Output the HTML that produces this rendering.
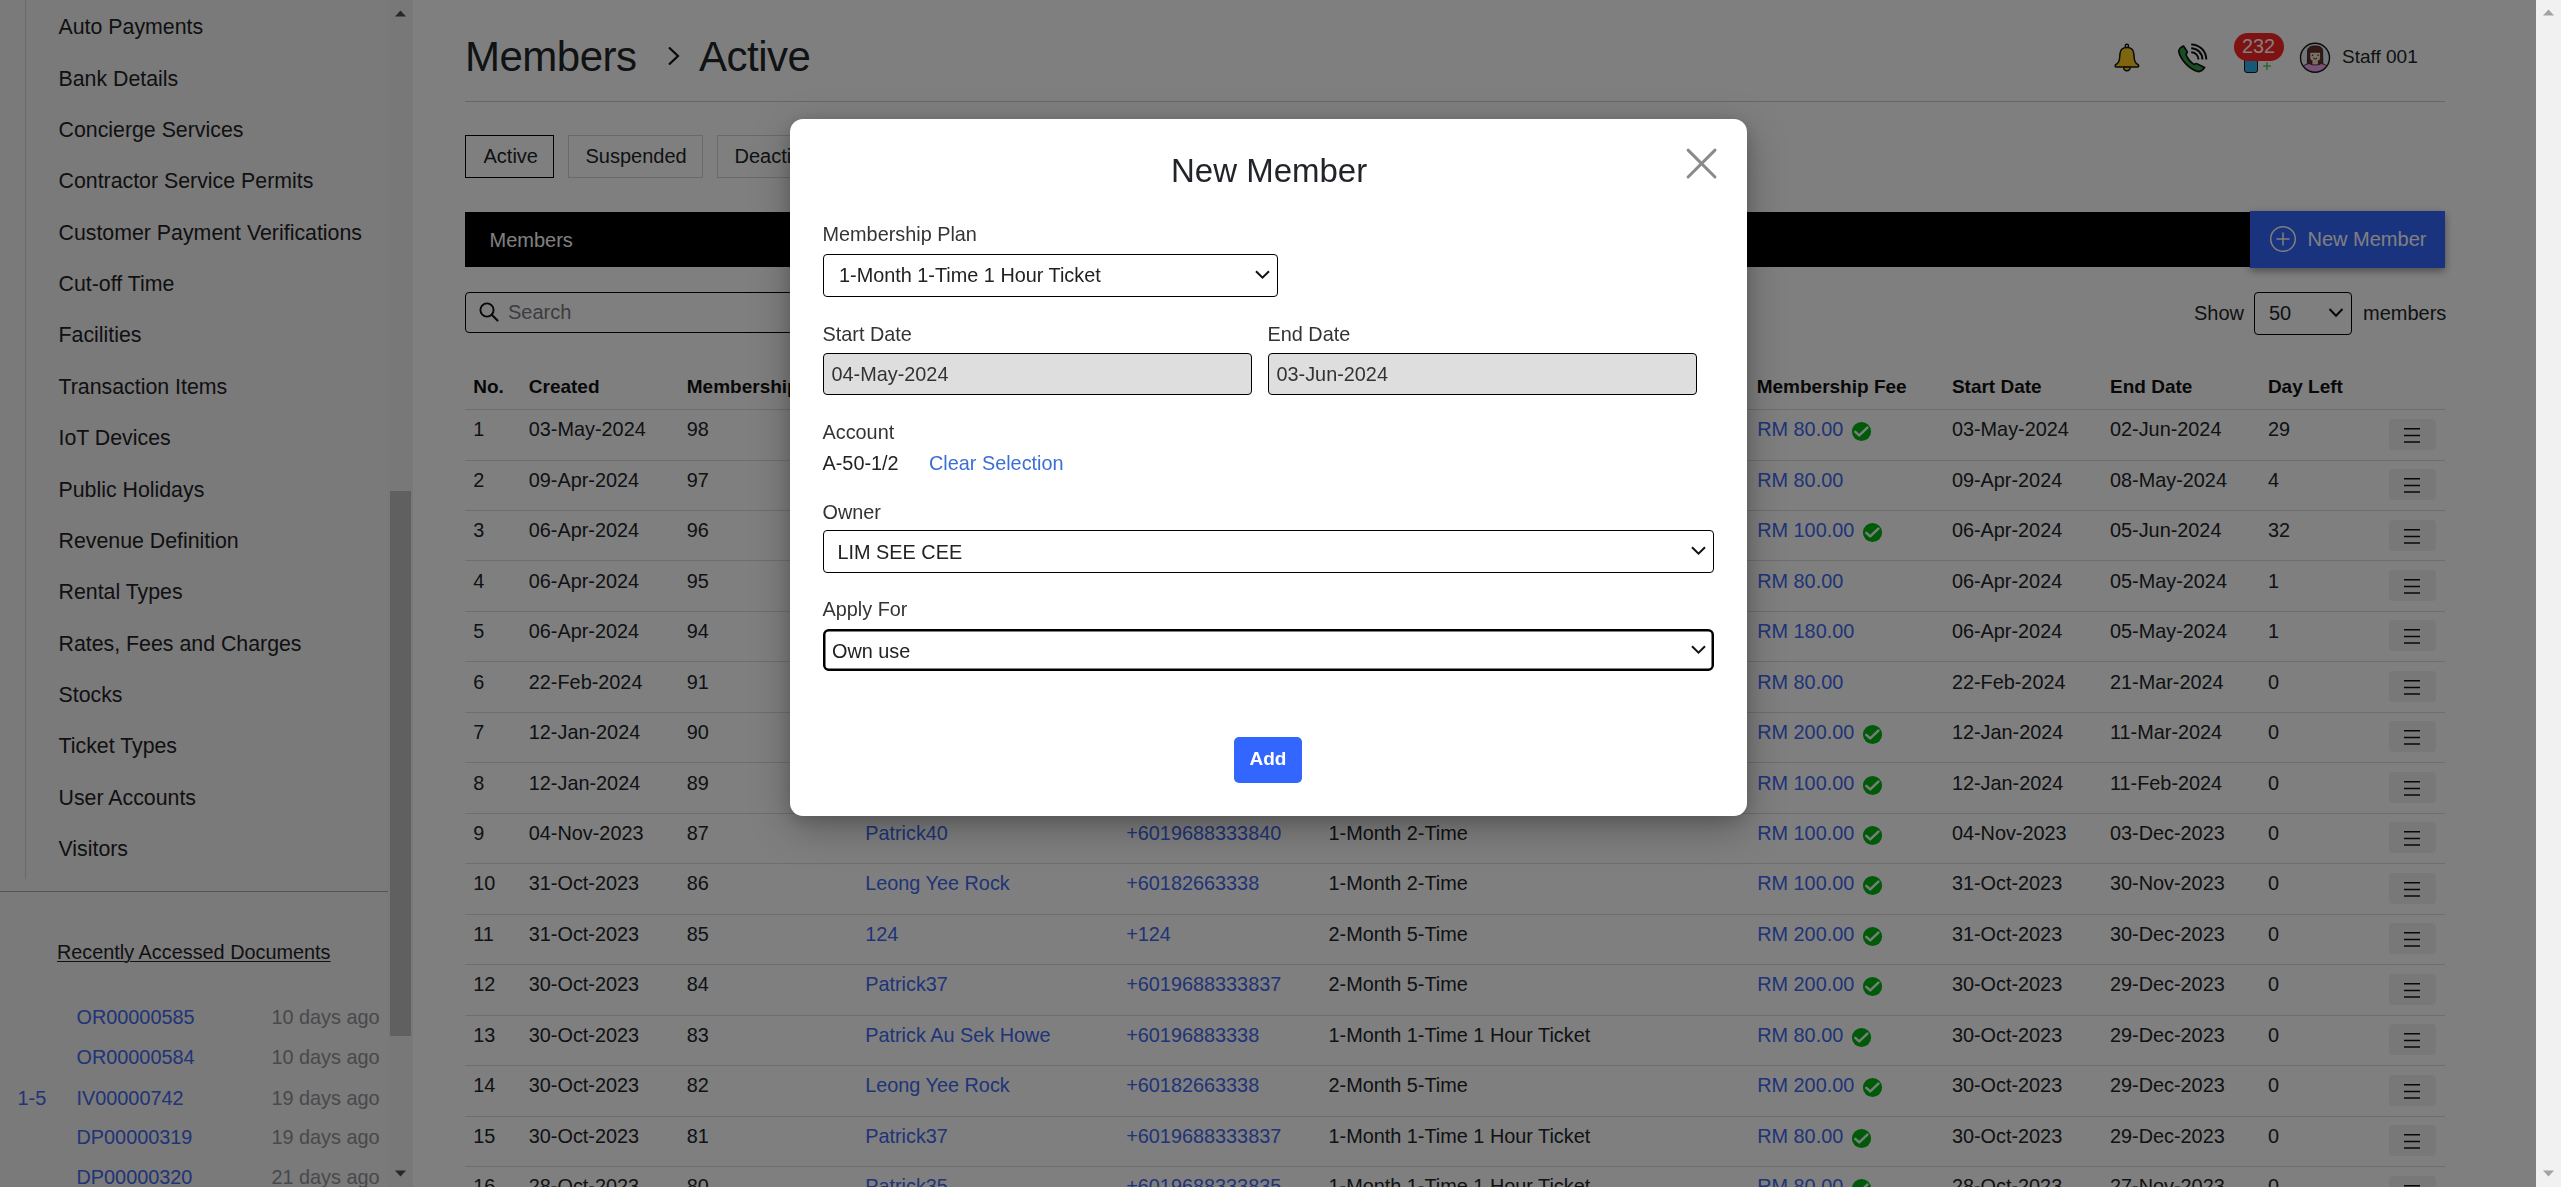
<!DOCTYPE html>
<html><head><meta charset="utf-8"><title>Members - Active</title>
<style>
html,body{margin:0;padding:0;width:2561px;height:1187px;overflow:hidden;background:#fff;font-family:"Liberation Sans", sans-serif;}
.t{position:absolute;white-space:nowrap;}
.r{position:absolute;box-sizing:border-box;}
svg{position:absolute;overflow:visible;}
</style></head><body>

<div class="r" style="left:0px;top:0px;width:413px;height:1187px;background:#f4f4f4;"></div>
<div class="r" style="left:25px;top:0px;width:1px;height:879px;background:#d2d2d2;"></div>
<div class="t " style="left:58.5px;top:17px;font-size:21.33px;line-height:21.33px;color:#1f2226;font-weight:400;">Auto Payments</div>
<div class="t " style="left:58.5px;top:69px;font-size:21.33px;line-height:21.33px;color:#1f2226;font-weight:400;">Bank Details</div>
<div class="t " style="left:58.5px;top:120px;font-size:21.33px;line-height:21.33px;color:#1f2226;font-weight:400;">Concierge Services</div>
<div class="t " style="left:58.5px;top:171px;font-size:21.33px;line-height:21.33px;color:#1f2226;font-weight:400;">Contractor Service Permits</div>
<div class="t " style="left:58.5px;top:223px;font-size:21.33px;line-height:21.33px;color:#1f2226;font-weight:400;">Customer Payment Verifications</div>
<div class="t " style="left:58.5px;top:274px;font-size:21.33px;line-height:21.33px;color:#1f2226;font-weight:400;">Cut-off Time</div>
<div class="t " style="left:58.5px;top:325px;font-size:21.33px;line-height:21.33px;color:#1f2226;font-weight:400;">Facilities</div>
<div class="t " style="left:58.5px;top:377px;font-size:21.33px;line-height:21.33px;color:#1f2226;font-weight:400;">Transaction Items</div>
<div class="t " style="left:58.5px;top:428px;font-size:21.33px;line-height:21.33px;color:#1f2226;font-weight:400;">IoT Devices</div>
<div class="t " style="left:58.5px;top:480px;font-size:21.33px;line-height:21.33px;color:#1f2226;font-weight:400;">Public Holidays</div>
<div class="t " style="left:58.5px;top:531px;font-size:21.33px;line-height:21.33px;color:#1f2226;font-weight:400;">Revenue Definition</div>
<div class="t " style="left:58.5px;top:582px;font-size:21.33px;line-height:21.33px;color:#1f2226;font-weight:400;">Rental Types</div>
<div class="t " style="left:58.5px;top:634px;font-size:21.33px;line-height:21.33px;color:#1f2226;font-weight:400;">Rates, Fees and Charges</div>
<div class="t " style="left:58.5px;top:685px;font-size:21.33px;line-height:21.33px;color:#1f2226;font-weight:400;">Stocks</div>
<div class="t " style="left:58.5px;top:736px;font-size:21.33px;line-height:21.33px;color:#1f2226;font-weight:400;">Ticket Types</div>
<div class="t " style="left:58.5px;top:788px;font-size:21.33px;line-height:21.33px;color:#1f2226;font-weight:400;">User Accounts</div>
<div class="t " style="left:58.5px;top:839px;font-size:21.33px;line-height:21.33px;color:#1f2226;font-weight:400;">Visitors</div>
<div class="r" style="left:0px;top:891px;width:388px;height:1px;background:#a9a9a9;"></div>
<div class="t " style="left:57.0px;top:943px;font-size:19.85px;line-height:19.85px;color:#1f2226;font-weight:400;text-decoration:underline;text-underline-offset:2px;text-decoration-thickness:1px;">Recently Accessed Documents</div>
<div class="t " style="left:76.5px;top:1008px;font-size:19.85px;line-height:19.85px;color:#4068ee;font-weight:400;">OR00000585</div>
<div class="t" style="right:2181.5px;top:1008px;font-size:19.85px;line-height:19.85px;color:#8f9396;font-weight:400;text-align:right;">10 days ago</div>
<div class="t " style="left:76.5px;top:1048px;font-size:19.85px;line-height:19.85px;color:#4068ee;font-weight:400;">OR00000584</div>
<div class="t" style="right:2181.5px;top:1048px;font-size:19.85px;line-height:19.85px;color:#8f9396;font-weight:400;text-align:right;">10 days ago</div>
<div class="t " style="left:76.5px;top:1089px;font-size:19.85px;line-height:19.85px;color:#4068ee;font-weight:400;">IV00000742</div>
<div class="t" style="right:2181.5px;top:1089px;font-size:19.85px;line-height:19.85px;color:#8f9396;font-weight:400;text-align:right;">19 days ago</div>
<div class="t " style="left:76.5px;top:1128px;font-size:19.85px;line-height:19.85px;color:#4068ee;font-weight:400;">DP00000319</div>
<div class="t" style="right:2181.5px;top:1128px;font-size:19.85px;line-height:19.85px;color:#8f9396;font-weight:400;text-align:right;">19 days ago</div>
<div class="t " style="left:76.5px;top:1168px;font-size:19.85px;line-height:19.85px;color:#4068ee;font-weight:400;">DP00000320</div>
<div class="t" style="right:2181.5px;top:1168px;font-size:19.85px;line-height:19.85px;color:#8f9396;font-weight:400;text-align:right;">21 days ago</div>
<div class="t " style="left:17.5px;top:1089px;font-size:19.85px;line-height:19.85px;color:#4068ee;font-weight:400;">1-5</div>
<div class="r" style="left:388px;top:0px;width:25px;height:1187px;background:#f1f1f1;"></div>
<div class="r" style="left:390px;top:491px;width:21px;height:545px;background:#c1c1c1;"></div>
<svg style="left:395px;top:10px" width="12" height="7"><polygon points="0,6.5 5.5,0.5 11,6.5" fill="#505050"/></svg>
<svg style="left:395px;top:1170px" width="12" height="7"><polygon points="0,0.5 5.5,6.5 11,0.5" fill="#505050"/></svg>
<div class="t " style="left:465.0px;top:36px;font-size:42px;line-height:42px;color:#212529;font-weight:400;letter-spacing:-0.5px;">Members</div>
<svg style="left:667px;top:46px" width="14" height="20"><polyline points="2,1.5 11,10 2,18.5" fill="none" stroke="#111" stroke-width="2.2"/></svg>
<div class="t " style="left:699.0px;top:36px;font-size:42px;line-height:42px;color:#212529;font-weight:400;letter-spacing:-0.5px;">Active</div>
<div class="r" style="left:465px;top:101px;width:1980px;height:1px;background:#cfcfcf;"></div>
<svg style="left:2108px;top:38px" width="40" height="40" viewBox="0 0 40 40">
<circle cx="18.9" cy="7.9" r="1.7" fill="none" stroke="#151515" stroke-width="1.4"/>
<path d="M8 28.9 C6.8 28.9 6.8 26.8 8.3 26.3 C10.2 25.3 11.3 23.5 11.6 20 L12 15.5 C12.4 11.5 14.5 9.6 18.9 9.6 C23.3 9.6 25.4 11.5 25.8 15.5 L26.2 20 C26.5 23.5 27.6 25.3 29.5 26.3 C31 26.8 31 28.9 29.8 28.9 Z" fill="#ffcc1c" stroke="#151515" stroke-width="1.5" stroke-linejoin="round"/>
<path d="M15.6 29.1 C15.6 31.6 17 32.8 18.9 32.8 C20.8 32.8 22.2 31.6 22.2 29.1 Z" fill="#ffcc1c" stroke="#151515" stroke-width="1.4" stroke-linejoin="round"/>
</svg>
<svg style="left:2173px;top:38px" width="40" height="40" viewBox="0 0 40 40">
<path d="M10.5 8 L14.2 13.6 C14.4 14.3 14.2 14.8 13.7 15.3 L12.9 16.2 C13.5 19.5 17.5 24.5 21.2 26.6 L22.6 25.8 C23.2 25.5 23.8 25.5 24.4 25.9 L31.6 29.6 C29.5 32.5 27.5 33.9 25 33.5 C16 31 7.5 21.5 5.8 13.5 C5.6 11.5 8 9 10.5 8 Z" fill="#2f9f45" stroke="#101010" stroke-width="1.7" stroke-linejoin="round"/>
<path d="M18.2 14.2 A7.3 7.3 0 0 1 25.5 21.5" fill="none" stroke="#101010" stroke-width="2"/>
<path d="M18.2 10.3 A11.2 11.2 0 0 1 29.4 21.5" fill="none" stroke="#101010" stroke-width="2"/>
<path d="M18.2 6.4 A15.1 15.1 0 0 1 33.3 21.5" fill="none" stroke="#101010" stroke-width="2"/>
</svg>
<div class="r" style="left:2244px;top:58px;width:14px;height:15px;background:#2fb0ee;border:1.2px solid #151515;border-radius:3px;"></div>
<svg style="left:2262px;top:61px" width="10" height="10"><path d="M5 1.2 V8.8 M1.2 5 H8.8" stroke="#6cc46c" stroke-width="1.6"/></svg>
<div class="r" style="left:2234px;top:33px;width:50px;height:28px;background:#ff2424;border-radius:14px;"></div>
<div class="t " style="left:2242.0px;top:37px;font-size:19.85px;line-height:19.85px;color:#fff;font-weight:400;">232</div>
<svg style="left:2295px;top:38px" width="40" height="40" viewBox="0 0 40 40">
<defs><clipPath id="avc"><circle cx="20" cy="19.8" r="14.3"/></clipPath></defs>
<circle cx="20" cy="19.8" r="14.3" fill="#e9eef5"/>
<g clip-path="url(#avc)">
<path d="M12.3 29 L12.6 13 C12.6 9.5 15 7.9 20.1 7.9 C25.2 7.9 27.6 9.5 27.6 13 L27.9 29 Z" fill="#6e3020" stroke="#1a1a1a" stroke-width="0.8"/>
<path d="M14.8 14.2 L14.8 19.5 C14.8 22 17 23.8 20.2 23.8 C23.4 23.8 25.6 22 25.6 19.5 L25.6 14.2 Z" fill="#f6dccb" stroke="#1a1a1a" stroke-width="0.7"/>
<path d="M17 23 V27.5 H23.4 V23" fill="#f6dccb" stroke="#1a1a1a" stroke-width="0.7"/>
<path d="M5 36 C6 29 9 26.2 14.5 25.6 C16 27.4 24.4 27.4 25.9 25.6 C31.4 26.2 34.4 29 35.4 36 Z" fill="#f2a6ec" stroke="#1a1a1a" stroke-width="0.8"/>
<circle cx="17.5" cy="17.3" r="0.75" fill="#1a1a1a"/><circle cx="23.1" cy="17.3" r="0.75" fill="#1a1a1a"/>
<path d="M18.3 20.1 Q20.2 22.1 22 20.1" fill="none" stroke="#1a1a1a" stroke-width="0.9"/>
</g>
<circle cx="20" cy="19.8" r="14.5" fill="none" stroke="#151515" stroke-width="1.4"/>
</svg>
<div class="t " style="left:2342.0px;top:47px;font-size:19px;line-height:19px;color:#212529;font-weight:400;">Staff 001</div>
<div class="r" style="left:465px;top:135px;width:89px;height:43px;border:1px solid #000;"></div>
<div class="t " style="left:483.5px;top:146px;font-size:20px;line-height:20px;color:#212529;font-weight:400;">Active</div>
<div class="r" style="left:568px;top:135px;width:135px;height:43px;border:1px solid #d4d4d4;"></div>
<div class="t " style="left:585.5px;top:146px;font-size:20px;line-height:20px;color:#212529;font-weight:400;">Suspended</div>
<div class="r" style="left:717px;top:135px;width:163px;height:43px;border:1px solid #d4d4d4;"></div>
<div class="t " style="left:734.5px;top:146px;font-size:20px;line-height:20px;color:#212529;font-weight:400;">Deactivated</div>
<div class="r" style="left:465px;top:212px;width:1786px;height:55px;background:#000;"></div>
<div class="t " style="left:489.5px;top:230px;font-size:20px;line-height:20px;color:#fff;font-weight:400;">Members</div>
<div class="r" style="left:2250px;top:211px;width:195px;height:57px;background:#3366ff;box-shadow:0 3px 8px rgba(0,0,0,0.4);"></div>
<svg style="left:2268px;top:224px" width="30" height="30"><circle cx="15" cy="15" r="12.3" fill="none" stroke="#fff" stroke-width="1.5"/><path d="M15 8.5 V21.5 M8.5 15 H21.5" stroke="#fff" stroke-width="1.5"/></svg>
<div class="t " style="left:2307.5px;top:229px;font-size:20px;line-height:20px;color:#fff;font-weight:400;">New Member</div>
<div class="r" style="left:465px;top:292px;width:835px;height:41px;border:1px solid #000;border-radius:4px;"></div>
<svg style="left:478px;top:301px" width="24" height="24"><circle cx="9" cy="9" r="6.6" fill="none" stroke="#111" stroke-width="1.9"/><path d="M13.8 13.8 L19.5 19.5" stroke="#111" stroke-width="2.1" stroke-linecap="round"/></svg>
<div class="t " style="left:508.0px;top:302px;font-size:20px;line-height:20px;color:#777b80;font-weight:400;">Search</div>
<div class="t " style="left:2194.0px;top:303px;font-size:20px;line-height:20px;color:#212529;font-weight:400;">Show</div>
<div class="r" style="left:2254px;top:292px;width:98px;height:43px;border:1px solid #000;border-radius:4px;"></div>
<div class="t " style="left:2269.0px;top:303px;font-size:20px;line-height:20px;color:#212529;font-weight:400;">50</div>
<svg style="left:2328px;top:307px" width="18" height="12"><polyline points="1.5,2 8,8.8 14.5,2" fill="none" stroke="#111" stroke-width="2"/></svg>
<div class="t " style="left:2363.0px;top:303px;font-size:20px;line-height:20px;color:#212529;font-weight:400;">members</div>
<div class="t " style="left:473.2px;top:377px;font-size:19px;line-height:19px;color:#111;font-weight:700;">No.</div>
<div class="t " style="left:528.8px;top:377px;font-size:19px;line-height:19px;color:#111;font-weight:700;">Created</div>
<div class="t " style="left:686.8px;top:377px;font-size:19px;line-height:19px;color:#111;font-weight:700;">Membership ID</div>
<div class="t " style="left:866.2px;top:377px;font-size:19px;line-height:19px;color:#111;font-weight:700;">Name</div>
<div class="t " style="left:1126.2px;top:377px;font-size:19px;line-height:19px;color:#111;font-weight:700;">Phone No.</div>
<div class="t " style="left:1328.5px;top:377px;font-size:19px;line-height:19px;color:#111;font-weight:700;">Membership Plan</div>
<div class="t " style="left:1756.7px;top:377px;font-size:19px;line-height:19px;color:#111;font-weight:700;">Membership Fee</div>
<div class="t " style="left:1951.9px;top:377px;font-size:19px;line-height:19px;color:#111;font-weight:700;">Start Date</div>
<div class="t " style="left:2110.0px;top:377px;font-size:19px;line-height:19px;color:#111;font-weight:700;">End Date</div>
<div class="t " style="left:2267.9px;top:377px;font-size:19px;line-height:19px;color:#111;font-weight:700;">Day Left</div>
<div class="r" style="left:465px;top:409px;width:1980px;height:1px;background:#dcdcdc;"></div>
<div class="t " style="left:473.2px;top:420px;font-size:19.85px;line-height:19.85px;color:#212529;font-weight:400;">1</div>
<div class="t " style="left:528.8px;top:420px;font-size:19.85px;line-height:19.85px;color:#212529;font-weight:400;">03-May-2024</div>
<div class="t " style="left:686.8px;top:420px;font-size:19.85px;line-height:19.85px;color:#212529;font-weight:400;">98</div>
<div class="t " style="left:865.2px;top:420px;font-size:19.85px;line-height:19.85px;color:#4068ee;font-weight:400;">Member98</div>
<div class="t " style="left:1126.2px;top:420px;font-size:19.85px;line-height:19.85px;color:#4068ee;font-weight:400;">+60123456798</div>
<div class="t " style="left:1328.5px;top:420px;font-size:19.85px;line-height:19.85px;color:#212529;font-weight:400;">1-Month 1-Time 1 Hour Ticket</div>
<div class="t " style="left:1757.2px;top:420px;font-size:19.85px;line-height:19.85px;color:#4068ee;font-weight:400;">RM 80.00</div>
<svg style="left:1850.7px;top:421.3px" width="21" height="21"><circle cx="10.5" cy="10.5" r="9.6" fill="#00b414"/><polyline points="4.3,10.9 8.2,14.4 16.4,6.6" fill="none" stroke="#f0fff0" stroke-width="2.5" stroke-linecap="round" stroke-linejoin="round"/></svg>
<div class="t " style="left:1951.9px;top:420px;font-size:19.85px;line-height:19.85px;color:#212529;font-weight:400;">03-May-2024</div>
<div class="t " style="left:2110.0px;top:420px;font-size:19.85px;line-height:19.85px;color:#212529;font-weight:400;">02-Jun-2024</div>
<div class="t " style="left:2267.9px;top:420px;font-size:19.85px;line-height:19.85px;color:#212529;font-weight:400;">29</div>
<div class="r" style="left:2389px;top:419px;width:47px;height:31px;background:#f0f0f0;border-radius:4px;"></div>
<svg style="left:2400px;top:418.60px" width="24" height="31"><path d="M4 9.7 H20 M4 16.4 H20 M4 23 H20" stroke="#111" stroke-width="1.5"/></svg>
<div class="r" style="left:465px;top:460px;width:1980px;height:1px;background:#dcdcdc;"></div>
<div class="t " style="left:473.2px;top:471px;font-size:19.85px;line-height:19.85px;color:#212529;font-weight:400;">2</div>
<div class="t " style="left:528.8px;top:471px;font-size:19.85px;line-height:19.85px;color:#212529;font-weight:400;">09-Apr-2024</div>
<div class="t " style="left:686.8px;top:471px;font-size:19.85px;line-height:19.85px;color:#212529;font-weight:400;">97</div>
<div class="t " style="left:865.2px;top:471px;font-size:19.85px;line-height:19.85px;color:#4068ee;font-weight:400;">Member97</div>
<div class="t " style="left:1126.2px;top:471px;font-size:19.85px;line-height:19.85px;color:#4068ee;font-weight:400;">+60123456797</div>
<div class="t " style="left:1328.5px;top:471px;font-size:19.85px;line-height:19.85px;color:#212529;font-weight:400;">1-Month 1-Time 1 Hour Ticket</div>
<div class="t " style="left:1757.2px;top:471px;font-size:19.85px;line-height:19.85px;color:#4068ee;font-weight:400;">RM 80.00</div>
<div class="t " style="left:1951.9px;top:471px;font-size:19.85px;line-height:19.85px;color:#212529;font-weight:400;">09-Apr-2024</div>
<div class="t " style="left:2110.0px;top:471px;font-size:19.85px;line-height:19.85px;color:#212529;font-weight:400;">08-May-2024</div>
<div class="t " style="left:2267.9px;top:471px;font-size:19.85px;line-height:19.85px;color:#212529;font-weight:400;">4</div>
<div class="r" style="left:2389px;top:469px;width:47px;height:31px;background:#f0f0f0;border-radius:4px;"></div>
<svg style="left:2400px;top:469.06px" width="24" height="31"><path d="M4 9.7 H20 M4 16.4 H20 M4 23 H20" stroke="#111" stroke-width="1.5"/></svg>
<div class="r" style="left:465px;top:510px;width:1980px;height:1px;background:#dcdcdc;"></div>
<div class="t " style="left:473.2px;top:521px;font-size:19.85px;line-height:19.85px;color:#212529;font-weight:400;">3</div>
<div class="t " style="left:528.8px;top:521px;font-size:19.85px;line-height:19.85px;color:#212529;font-weight:400;">06-Apr-2024</div>
<div class="t " style="left:686.8px;top:521px;font-size:19.85px;line-height:19.85px;color:#212529;font-weight:400;">96</div>
<div class="t " style="left:865.2px;top:521px;font-size:19.85px;line-height:19.85px;color:#4068ee;font-weight:400;">Member96</div>
<div class="t " style="left:1126.2px;top:521px;font-size:19.85px;line-height:19.85px;color:#4068ee;font-weight:400;">+60123456796</div>
<div class="t " style="left:1328.5px;top:521px;font-size:19.85px;line-height:19.85px;color:#212529;font-weight:400;">1-Month 2-Time</div>
<div class="t " style="left:1757.2px;top:521px;font-size:19.85px;line-height:19.85px;color:#4068ee;font-weight:400;">RM 100.00</div>
<svg style="left:1861.7px;top:522.2px" width="21" height="21"><circle cx="10.5" cy="10.5" r="9.6" fill="#00b414"/><polyline points="4.3,10.9 8.2,14.4 16.4,6.6" fill="none" stroke="#f0fff0" stroke-width="2.5" stroke-linecap="round" stroke-linejoin="round"/></svg>
<div class="t " style="left:1951.9px;top:521px;font-size:19.85px;line-height:19.85px;color:#212529;font-weight:400;">06-Apr-2024</div>
<div class="t " style="left:2110.0px;top:521px;font-size:19.85px;line-height:19.85px;color:#212529;font-weight:400;">05-Jun-2024</div>
<div class="t " style="left:2267.9px;top:521px;font-size:19.85px;line-height:19.85px;color:#212529;font-weight:400;">32</div>
<div class="r" style="left:2389px;top:520px;width:47px;height:31px;background:#f0f0f0;border-radius:4px;"></div>
<svg style="left:2400px;top:519.52px" width="24" height="31"><path d="M4 9.7 H20 M4 16.4 H20 M4 23 H20" stroke="#111" stroke-width="1.5"/></svg>
<div class="r" style="left:465px;top:560px;width:1980px;height:1px;background:#dcdcdc;"></div>
<div class="t " style="left:473.2px;top:572px;font-size:19.85px;line-height:19.85px;color:#212529;font-weight:400;">4</div>
<div class="t " style="left:528.8px;top:572px;font-size:19.85px;line-height:19.85px;color:#212529;font-weight:400;">06-Apr-2024</div>
<div class="t " style="left:686.8px;top:572px;font-size:19.85px;line-height:19.85px;color:#212529;font-weight:400;">95</div>
<div class="t " style="left:865.2px;top:572px;font-size:19.85px;line-height:19.85px;color:#4068ee;font-weight:400;">Member95</div>
<div class="t " style="left:1126.2px;top:572px;font-size:19.85px;line-height:19.85px;color:#4068ee;font-weight:400;">+60123456795</div>
<div class="t " style="left:1328.5px;top:572px;font-size:19.85px;line-height:19.85px;color:#212529;font-weight:400;">1-Month 1-Time 1 Hour Ticket</div>
<div class="t " style="left:1757.2px;top:572px;font-size:19.85px;line-height:19.85px;color:#4068ee;font-weight:400;">RM 80.00</div>
<div class="t " style="left:1951.9px;top:572px;font-size:19.85px;line-height:19.85px;color:#212529;font-weight:400;">06-Apr-2024</div>
<div class="t " style="left:2110.0px;top:572px;font-size:19.85px;line-height:19.85px;color:#212529;font-weight:400;">05-May-2024</div>
<div class="t " style="left:2267.9px;top:572px;font-size:19.85px;line-height:19.85px;color:#212529;font-weight:400;">1</div>
<div class="r" style="left:2389px;top:570px;width:47px;height:31px;background:#f0f0f0;border-radius:4px;"></div>
<svg style="left:2400px;top:569.98px" width="24" height="31"><path d="M4 9.7 H20 M4 16.4 H20 M4 23 H20" stroke="#111" stroke-width="1.5"/></svg>
<div class="r" style="left:465px;top:611px;width:1980px;height:1px;background:#dcdcdc;"></div>
<div class="t " style="left:473.2px;top:622px;font-size:19.85px;line-height:19.85px;color:#212529;font-weight:400;">5</div>
<div class="t " style="left:528.8px;top:622px;font-size:19.85px;line-height:19.85px;color:#212529;font-weight:400;">06-Apr-2024</div>
<div class="t " style="left:686.8px;top:622px;font-size:19.85px;line-height:19.85px;color:#212529;font-weight:400;">94</div>
<div class="t " style="left:865.2px;top:622px;font-size:19.85px;line-height:19.85px;color:#4068ee;font-weight:400;">Member94</div>
<div class="t " style="left:1126.2px;top:622px;font-size:19.85px;line-height:19.85px;color:#4068ee;font-weight:400;">+60123456794</div>
<div class="t " style="left:1328.5px;top:622px;font-size:19.85px;line-height:19.85px;color:#212529;font-weight:400;">1-Month 5-Time</div>
<div class="t " style="left:1757.2px;top:622px;font-size:19.85px;line-height:19.85px;color:#4068ee;font-weight:400;">RM 180.00</div>
<div class="t " style="left:1951.9px;top:622px;font-size:19.85px;line-height:19.85px;color:#212529;font-weight:400;">06-Apr-2024</div>
<div class="t " style="left:2110.0px;top:622px;font-size:19.85px;line-height:19.85px;color:#212529;font-weight:400;">05-May-2024</div>
<div class="t " style="left:2267.9px;top:622px;font-size:19.85px;line-height:19.85px;color:#212529;font-weight:400;">1</div>
<div class="r" style="left:2389px;top:620px;width:47px;height:31px;background:#f0f0f0;border-radius:4px;"></div>
<svg style="left:2400px;top:620.44px" width="24" height="31"><path d="M4 9.7 H20 M4 16.4 H20 M4 23 H20" stroke="#111" stroke-width="1.5"/></svg>
<div class="r" style="left:465px;top:661px;width:1980px;height:1px;background:#dcdcdc;"></div>
<div class="t " style="left:473.2px;top:673px;font-size:19.85px;line-height:19.85px;color:#212529;font-weight:400;">6</div>
<div class="t " style="left:528.8px;top:673px;font-size:19.85px;line-height:19.85px;color:#212529;font-weight:400;">22-Feb-2024</div>
<div class="t " style="left:686.8px;top:673px;font-size:19.85px;line-height:19.85px;color:#212529;font-weight:400;">91</div>
<div class="t " style="left:865.2px;top:673px;font-size:19.85px;line-height:19.85px;color:#4068ee;font-weight:400;">Member91</div>
<div class="t " style="left:1126.2px;top:673px;font-size:19.85px;line-height:19.85px;color:#4068ee;font-weight:400;">+60123456791</div>
<div class="t " style="left:1328.5px;top:673px;font-size:19.85px;line-height:19.85px;color:#212529;font-weight:400;">1-Month 1-Time 1 Hour Ticket</div>
<div class="t " style="left:1757.2px;top:673px;font-size:19.85px;line-height:19.85px;color:#4068ee;font-weight:400;">RM 80.00</div>
<div class="t " style="left:1951.9px;top:673px;font-size:19.85px;line-height:19.85px;color:#212529;font-weight:400;">22-Feb-2024</div>
<div class="t " style="left:2110.0px;top:673px;font-size:19.85px;line-height:19.85px;color:#212529;font-weight:400;">21-Mar-2024</div>
<div class="t " style="left:2267.9px;top:673px;font-size:19.85px;line-height:19.85px;color:#212529;font-weight:400;">0</div>
<div class="r" style="left:2389px;top:671px;width:47px;height:31px;background:#f0f0f0;border-radius:4px;"></div>
<svg style="left:2400px;top:670.90px" width="24" height="31"><path d="M4 9.7 H20 M4 16.4 H20 M4 23 H20" stroke="#111" stroke-width="1.5"/></svg>
<div class="r" style="left:465px;top:712px;width:1980px;height:1px;background:#dcdcdc;"></div>
<div class="t " style="left:473.2px;top:723px;font-size:19.85px;line-height:19.85px;color:#212529;font-weight:400;">7</div>
<div class="t " style="left:528.8px;top:723px;font-size:19.85px;line-height:19.85px;color:#212529;font-weight:400;">12-Jan-2024</div>
<div class="t " style="left:686.8px;top:723px;font-size:19.85px;line-height:19.85px;color:#212529;font-weight:400;">90</div>
<div class="t " style="left:865.2px;top:723px;font-size:19.85px;line-height:19.85px;color:#4068ee;font-weight:400;">Member90</div>
<div class="t " style="left:1126.2px;top:723px;font-size:19.85px;line-height:19.85px;color:#4068ee;font-weight:400;">+60123456790</div>
<div class="t " style="left:1328.5px;top:723px;font-size:19.85px;line-height:19.85px;color:#212529;font-weight:400;">2-Month 5-Time</div>
<div class="t " style="left:1757.2px;top:723px;font-size:19.85px;line-height:19.85px;color:#4068ee;font-weight:400;">RM 200.00</div>
<svg style="left:1861.7px;top:724.1px" width="21" height="21"><circle cx="10.5" cy="10.5" r="9.6" fill="#00b414"/><polyline points="4.3,10.9 8.2,14.4 16.4,6.6" fill="none" stroke="#f0fff0" stroke-width="2.5" stroke-linecap="round" stroke-linejoin="round"/></svg>
<div class="t " style="left:1951.9px;top:723px;font-size:19.85px;line-height:19.85px;color:#212529;font-weight:400;">12-Jan-2024</div>
<div class="t " style="left:2110.0px;top:723px;font-size:19.85px;line-height:19.85px;color:#212529;font-weight:400;">11-Mar-2024</div>
<div class="t " style="left:2267.9px;top:723px;font-size:19.85px;line-height:19.85px;color:#212529;font-weight:400;">0</div>
<div class="r" style="left:2389px;top:721px;width:47px;height:31px;background:#f0f0f0;border-radius:4px;"></div>
<svg style="left:2400px;top:721.36px" width="24" height="31"><path d="M4 9.7 H20 M4 16.4 H20 M4 23 H20" stroke="#111" stroke-width="1.5"/></svg>
<div class="r" style="left:465px;top:762px;width:1980px;height:1px;background:#dcdcdc;"></div>
<div class="t " style="left:473.2px;top:774px;font-size:19.85px;line-height:19.85px;color:#212529;font-weight:400;">8</div>
<div class="t " style="left:528.8px;top:774px;font-size:19.85px;line-height:19.85px;color:#212529;font-weight:400;">12-Jan-2024</div>
<div class="t " style="left:686.8px;top:774px;font-size:19.85px;line-height:19.85px;color:#212529;font-weight:400;">89</div>
<div class="t " style="left:865.2px;top:774px;font-size:19.85px;line-height:19.85px;color:#4068ee;font-weight:400;">Member89</div>
<div class="t " style="left:1126.2px;top:774px;font-size:19.85px;line-height:19.85px;color:#4068ee;font-weight:400;">+60123456789</div>
<div class="t " style="left:1328.5px;top:774px;font-size:19.85px;line-height:19.85px;color:#212529;font-weight:400;">1-Month 2-Time</div>
<div class="t " style="left:1757.2px;top:774px;font-size:19.85px;line-height:19.85px;color:#4068ee;font-weight:400;">RM 100.00</div>
<svg style="left:1861.7px;top:774.5px" width="21" height="21"><circle cx="10.5" cy="10.5" r="9.6" fill="#00b414"/><polyline points="4.3,10.9 8.2,14.4 16.4,6.6" fill="none" stroke="#f0fff0" stroke-width="2.5" stroke-linecap="round" stroke-linejoin="round"/></svg>
<div class="t " style="left:1951.9px;top:774px;font-size:19.85px;line-height:19.85px;color:#212529;font-weight:400;">12-Jan-2024</div>
<div class="t " style="left:2110.0px;top:774px;font-size:19.85px;line-height:19.85px;color:#212529;font-weight:400;">11-Feb-2024</div>
<div class="t " style="left:2267.9px;top:774px;font-size:19.85px;line-height:19.85px;color:#212529;font-weight:400;">0</div>
<div class="r" style="left:2389px;top:772px;width:47px;height:31px;background:#f0f0f0;border-radius:4px;"></div>
<svg style="left:2400px;top:771.82px" width="24" height="31"><path d="M4 9.7 H20 M4 16.4 H20 M4 23 H20" stroke="#111" stroke-width="1.5"/></svg>
<div class="r" style="left:465px;top:813px;width:1980px;height:1px;background:#dcdcdc;"></div>
<div class="t " style="left:473.2px;top:824px;font-size:19.85px;line-height:19.85px;color:#212529;font-weight:400;">9</div>
<div class="t " style="left:528.8px;top:824px;font-size:19.85px;line-height:19.85px;color:#212529;font-weight:400;">04-Nov-2023</div>
<div class="t " style="left:686.8px;top:824px;font-size:19.85px;line-height:19.85px;color:#212529;font-weight:400;">87</div>
<div class="t " style="left:865.2px;top:824px;font-size:19.85px;line-height:19.85px;color:#4068ee;font-weight:400;">Patrick40</div>
<div class="t " style="left:1126.2px;top:824px;font-size:19.85px;line-height:19.85px;color:#4068ee;font-weight:400;">+6019688333840</div>
<div class="t " style="left:1328.5px;top:824px;font-size:19.85px;line-height:19.85px;color:#212529;font-weight:400;">1-Month 2-Time</div>
<div class="t " style="left:1757.2px;top:824px;font-size:19.85px;line-height:19.85px;color:#4068ee;font-weight:400;">RM 100.00</div>
<svg style="left:1861.7px;top:825.0px" width="21" height="21"><circle cx="10.5" cy="10.5" r="9.6" fill="#00b414"/><polyline points="4.3,10.9 8.2,14.4 16.4,6.6" fill="none" stroke="#f0fff0" stroke-width="2.5" stroke-linecap="round" stroke-linejoin="round"/></svg>
<div class="t " style="left:1951.9px;top:824px;font-size:19.85px;line-height:19.85px;color:#212529;font-weight:400;">04-Nov-2023</div>
<div class="t " style="left:2110.0px;top:824px;font-size:19.85px;line-height:19.85px;color:#212529;font-weight:400;">03-Dec-2023</div>
<div class="t " style="left:2267.9px;top:824px;font-size:19.85px;line-height:19.85px;color:#212529;font-weight:400;">0</div>
<div class="r" style="left:2389px;top:822px;width:47px;height:31px;background:#f0f0f0;border-radius:4px;"></div>
<svg style="left:2400px;top:822.28px" width="24" height="31"><path d="M4 9.7 H20 M4 16.4 H20 M4 23 H20" stroke="#111" stroke-width="1.5"/></svg>
<div class="r" style="left:465px;top:863px;width:1980px;height:1px;background:#dcdcdc;"></div>
<div class="t " style="left:473.2px;top:874px;font-size:19.85px;line-height:19.85px;color:#212529;font-weight:400;">10</div>
<div class="t " style="left:528.8px;top:874px;font-size:19.85px;line-height:19.85px;color:#212529;font-weight:400;">31-Oct-2023</div>
<div class="t " style="left:686.8px;top:874px;font-size:19.85px;line-height:19.85px;color:#212529;font-weight:400;">86</div>
<div class="t " style="left:865.2px;top:874px;font-size:19.85px;line-height:19.85px;color:#4068ee;font-weight:400;">Leong Yee Rock</div>
<div class="t " style="left:1126.2px;top:874px;font-size:19.85px;line-height:19.85px;color:#4068ee;font-weight:400;">+60182663338</div>
<div class="t " style="left:1328.5px;top:874px;font-size:19.85px;line-height:19.85px;color:#212529;font-weight:400;">1-Month 2-Time</div>
<div class="t " style="left:1757.2px;top:874px;font-size:19.85px;line-height:19.85px;color:#4068ee;font-weight:400;">RM 100.00</div>
<svg style="left:1861.7px;top:875.4px" width="21" height="21"><circle cx="10.5" cy="10.5" r="9.6" fill="#00b414"/><polyline points="4.3,10.9 8.2,14.4 16.4,6.6" fill="none" stroke="#f0fff0" stroke-width="2.5" stroke-linecap="round" stroke-linejoin="round"/></svg>
<div class="t " style="left:1951.9px;top:874px;font-size:19.85px;line-height:19.85px;color:#212529;font-weight:400;">31-Oct-2023</div>
<div class="t " style="left:2110.0px;top:874px;font-size:19.85px;line-height:19.85px;color:#212529;font-weight:400;">30-Nov-2023</div>
<div class="t " style="left:2267.9px;top:874px;font-size:19.85px;line-height:19.85px;color:#212529;font-weight:400;">0</div>
<div class="r" style="left:2389px;top:873px;width:47px;height:31px;background:#f0f0f0;border-radius:4px;"></div>
<svg style="left:2400px;top:872.74px" width="24" height="31"><path d="M4 9.7 H20 M4 16.4 H20 M4 23 H20" stroke="#111" stroke-width="1.5"/></svg>
<div class="r" style="left:465px;top:914px;width:1980px;height:1px;background:#dcdcdc;"></div>
<div class="t " style="left:473.2px;top:925px;font-size:19.85px;line-height:19.85px;color:#212529;font-weight:400;">11</div>
<div class="t " style="left:528.8px;top:925px;font-size:19.85px;line-height:19.85px;color:#212529;font-weight:400;">31-Oct-2023</div>
<div class="t " style="left:686.8px;top:925px;font-size:19.85px;line-height:19.85px;color:#212529;font-weight:400;">85</div>
<div class="t " style="left:865.2px;top:925px;font-size:19.85px;line-height:19.85px;color:#4068ee;font-weight:400;">124</div>
<div class="t " style="left:1126.2px;top:925px;font-size:19.85px;line-height:19.85px;color:#4068ee;font-weight:400;">+124</div>
<div class="t " style="left:1328.5px;top:925px;font-size:19.85px;line-height:19.85px;color:#212529;font-weight:400;">2-Month 5-Time</div>
<div class="t " style="left:1757.2px;top:925px;font-size:19.85px;line-height:19.85px;color:#4068ee;font-weight:400;">RM 200.00</div>
<svg style="left:1861.7px;top:925.9px" width="21" height="21"><circle cx="10.5" cy="10.5" r="9.6" fill="#00b414"/><polyline points="4.3,10.9 8.2,14.4 16.4,6.6" fill="none" stroke="#f0fff0" stroke-width="2.5" stroke-linecap="round" stroke-linejoin="round"/></svg>
<div class="t " style="left:1951.9px;top:925px;font-size:19.85px;line-height:19.85px;color:#212529;font-weight:400;">31-Oct-2023</div>
<div class="t " style="left:2110.0px;top:925px;font-size:19.85px;line-height:19.85px;color:#212529;font-weight:400;">30-Dec-2023</div>
<div class="t " style="left:2267.9px;top:925px;font-size:19.85px;line-height:19.85px;color:#212529;font-weight:400;">0</div>
<div class="r" style="left:2389px;top:923px;width:47px;height:31px;background:#f0f0f0;border-radius:4px;"></div>
<svg style="left:2400px;top:923.20px" width="24" height="31"><path d="M4 9.7 H20 M4 16.4 H20 M4 23 H20" stroke="#111" stroke-width="1.5"/></svg>
<div class="r" style="left:465px;top:964px;width:1980px;height:1px;background:#dcdcdc;"></div>
<div class="t " style="left:473.2px;top:975px;font-size:19.85px;line-height:19.85px;color:#212529;font-weight:400;">12</div>
<div class="t " style="left:528.8px;top:975px;font-size:19.85px;line-height:19.85px;color:#212529;font-weight:400;">30-Oct-2023</div>
<div class="t " style="left:686.8px;top:975px;font-size:19.85px;line-height:19.85px;color:#212529;font-weight:400;">84</div>
<div class="t " style="left:865.2px;top:975px;font-size:19.85px;line-height:19.85px;color:#4068ee;font-weight:400;">Patrick37</div>
<div class="t " style="left:1126.2px;top:975px;font-size:19.85px;line-height:19.85px;color:#4068ee;font-weight:400;">+6019688333837</div>
<div class="t " style="left:1328.5px;top:975px;font-size:19.85px;line-height:19.85px;color:#212529;font-weight:400;">2-Month 5-Time</div>
<div class="t " style="left:1757.2px;top:975px;font-size:19.85px;line-height:19.85px;color:#4068ee;font-weight:400;">RM 200.00</div>
<svg style="left:1861.7px;top:976.4px" width="21" height="21"><circle cx="10.5" cy="10.5" r="9.6" fill="#00b414"/><polyline points="4.3,10.9 8.2,14.4 16.4,6.6" fill="none" stroke="#f0fff0" stroke-width="2.5" stroke-linecap="round" stroke-linejoin="round"/></svg>
<div class="t " style="left:1951.9px;top:975px;font-size:19.85px;line-height:19.85px;color:#212529;font-weight:400;">30-Oct-2023</div>
<div class="t " style="left:2110.0px;top:975px;font-size:19.85px;line-height:19.85px;color:#212529;font-weight:400;">29-Dec-2023</div>
<div class="t " style="left:2267.9px;top:975px;font-size:19.85px;line-height:19.85px;color:#212529;font-weight:400;">0</div>
<div class="r" style="left:2389px;top:974px;width:47px;height:31px;background:#f0f0f0;border-radius:4px;"></div>
<svg style="left:2400px;top:973.66px" width="24" height="31"><path d="M4 9.7 H20 M4 16.4 H20 M4 23 H20" stroke="#111" stroke-width="1.5"/></svg>
<div class="r" style="left:465px;top:1015px;width:1980px;height:1px;background:#dcdcdc;"></div>
<div class="t " style="left:473.2px;top:1026px;font-size:19.85px;line-height:19.85px;color:#212529;font-weight:400;">13</div>
<div class="t " style="left:528.8px;top:1026px;font-size:19.85px;line-height:19.85px;color:#212529;font-weight:400;">30-Oct-2023</div>
<div class="t " style="left:686.8px;top:1026px;font-size:19.85px;line-height:19.85px;color:#212529;font-weight:400;">83</div>
<div class="t " style="left:865.2px;top:1026px;font-size:19.85px;line-height:19.85px;color:#4068ee;font-weight:400;">Patrick Au Sek Howe</div>
<div class="t " style="left:1126.2px;top:1026px;font-size:19.85px;line-height:19.85px;color:#4068ee;font-weight:400;">+60196883338</div>
<div class="t " style="left:1328.5px;top:1026px;font-size:19.85px;line-height:19.85px;color:#212529;font-weight:400;">1-Month 1-Time 1 Hour Ticket</div>
<div class="t " style="left:1757.2px;top:1026px;font-size:19.85px;line-height:19.85px;color:#4068ee;font-weight:400;">RM 80.00</div>
<svg style="left:1850.7px;top:1026.8px" width="21" height="21"><circle cx="10.5" cy="10.5" r="9.6" fill="#00b414"/><polyline points="4.3,10.9 8.2,14.4 16.4,6.6" fill="none" stroke="#f0fff0" stroke-width="2.5" stroke-linecap="round" stroke-linejoin="round"/></svg>
<div class="t " style="left:1951.9px;top:1026px;font-size:19.85px;line-height:19.85px;color:#212529;font-weight:400;">30-Oct-2023</div>
<div class="t " style="left:2110.0px;top:1026px;font-size:19.85px;line-height:19.85px;color:#212529;font-weight:400;">29-Dec-2023</div>
<div class="t " style="left:2267.9px;top:1026px;font-size:19.85px;line-height:19.85px;color:#212529;font-weight:400;">0</div>
<div class="r" style="left:2389px;top:1024px;width:47px;height:31px;background:#f0f0f0;border-radius:4px;"></div>
<svg style="left:2400px;top:1024.12px" width="24" height="31"><path d="M4 9.7 H20 M4 16.4 H20 M4 23 H20" stroke="#111" stroke-width="1.5"/></svg>
<div class="r" style="left:465px;top:1065px;width:1980px;height:1px;background:#dcdcdc;"></div>
<div class="t " style="left:473.2px;top:1076px;font-size:19.85px;line-height:19.85px;color:#212529;font-weight:400;">14</div>
<div class="t " style="left:528.8px;top:1076px;font-size:19.85px;line-height:19.85px;color:#212529;font-weight:400;">30-Oct-2023</div>
<div class="t " style="left:686.8px;top:1076px;font-size:19.85px;line-height:19.85px;color:#212529;font-weight:400;">82</div>
<div class="t " style="left:865.2px;top:1076px;font-size:19.85px;line-height:19.85px;color:#4068ee;font-weight:400;">Leong Yee Rock</div>
<div class="t " style="left:1126.2px;top:1076px;font-size:19.85px;line-height:19.85px;color:#4068ee;font-weight:400;">+60182663338</div>
<div class="t " style="left:1328.5px;top:1076px;font-size:19.85px;line-height:19.85px;color:#212529;font-weight:400;">2-Month 5-Time</div>
<div class="t " style="left:1757.2px;top:1076px;font-size:19.85px;line-height:19.85px;color:#4068ee;font-weight:400;">RM 200.00</div>
<svg style="left:1861.7px;top:1077.3px" width="21" height="21"><circle cx="10.5" cy="10.5" r="9.6" fill="#00b414"/><polyline points="4.3,10.9 8.2,14.4 16.4,6.6" fill="none" stroke="#f0fff0" stroke-width="2.5" stroke-linecap="round" stroke-linejoin="round"/></svg>
<div class="t " style="left:1951.9px;top:1076px;font-size:19.85px;line-height:19.85px;color:#212529;font-weight:400;">30-Oct-2023</div>
<div class="t " style="left:2110.0px;top:1076px;font-size:19.85px;line-height:19.85px;color:#212529;font-weight:400;">29-Dec-2023</div>
<div class="t " style="left:2267.9px;top:1076px;font-size:19.85px;line-height:19.85px;color:#212529;font-weight:400;">0</div>
<div class="r" style="left:2389px;top:1075px;width:47px;height:31px;background:#f0f0f0;border-radius:4px;"></div>
<svg style="left:2400px;top:1074.58px" width="24" height="31"><path d="M4 9.7 H20 M4 16.4 H20 M4 23 H20" stroke="#111" stroke-width="1.5"/></svg>
<div class="r" style="left:465px;top:1116px;width:1980px;height:1px;background:#dcdcdc;"></div>
<div class="t " style="left:473.2px;top:1127px;font-size:19.85px;line-height:19.85px;color:#212529;font-weight:400;">15</div>
<div class="t " style="left:528.8px;top:1127px;font-size:19.85px;line-height:19.85px;color:#212529;font-weight:400;">30-Oct-2023</div>
<div class="t " style="left:686.8px;top:1127px;font-size:19.85px;line-height:19.85px;color:#212529;font-weight:400;">81</div>
<div class="t " style="left:865.2px;top:1127px;font-size:19.85px;line-height:19.85px;color:#4068ee;font-weight:400;">Patrick37</div>
<div class="t " style="left:1126.2px;top:1127px;font-size:19.85px;line-height:19.85px;color:#4068ee;font-weight:400;">+6019688333837</div>
<div class="t " style="left:1328.5px;top:1127px;font-size:19.85px;line-height:19.85px;color:#212529;font-weight:400;">1-Month 1-Time 1 Hour Ticket</div>
<div class="t " style="left:1757.2px;top:1127px;font-size:19.85px;line-height:19.85px;color:#4068ee;font-weight:400;">RM 80.00</div>
<svg style="left:1850.7px;top:1127.7px" width="21" height="21"><circle cx="10.5" cy="10.5" r="9.6" fill="#00b414"/><polyline points="4.3,10.9 8.2,14.4 16.4,6.6" fill="none" stroke="#f0fff0" stroke-width="2.5" stroke-linecap="round" stroke-linejoin="round"/></svg>
<div class="t " style="left:1951.9px;top:1127px;font-size:19.85px;line-height:19.85px;color:#212529;font-weight:400;">30-Oct-2023</div>
<div class="t " style="left:2110.0px;top:1127px;font-size:19.85px;line-height:19.85px;color:#212529;font-weight:400;">29-Dec-2023</div>
<div class="t " style="left:2267.9px;top:1127px;font-size:19.85px;line-height:19.85px;color:#212529;font-weight:400;">0</div>
<div class="r" style="left:2389px;top:1125px;width:47px;height:31px;background:#f0f0f0;border-radius:4px;"></div>
<svg style="left:2400px;top:1125.04px" width="24" height="31"><path d="M4 9.7 H20 M4 16.4 H20 M4 23 H20" stroke="#111" stroke-width="1.5"/></svg>
<div class="r" style="left:465px;top:1166px;width:1980px;height:1px;background:#dcdcdc;"></div>
<div class="t " style="left:473.2px;top:1177px;font-size:19.85px;line-height:19.85px;color:#212529;font-weight:400;">16</div>
<div class="t " style="left:528.8px;top:1177px;font-size:19.85px;line-height:19.85px;color:#212529;font-weight:400;">28-Oct-2023</div>
<div class="t " style="left:686.8px;top:1177px;font-size:19.85px;line-height:19.85px;color:#212529;font-weight:400;">80</div>
<div class="t " style="left:865.2px;top:1177px;font-size:19.85px;line-height:19.85px;color:#4068ee;font-weight:400;">Patrick35</div>
<div class="t " style="left:1126.2px;top:1177px;font-size:19.85px;line-height:19.85px;color:#4068ee;font-weight:400;">+6019688333835</div>
<div class="t " style="left:1328.5px;top:1177px;font-size:19.85px;line-height:19.85px;color:#212529;font-weight:400;">1-Month 1-Time 1 Hour Ticket</div>
<div class="t " style="left:1757.2px;top:1177px;font-size:19.85px;line-height:19.85px;color:#4068ee;font-weight:400;">RM 80.00</div>
<svg style="left:1850.7px;top:1178.2px" width="21" height="21"><circle cx="10.5" cy="10.5" r="9.6" fill="#00b414"/><polyline points="4.3,10.9 8.2,14.4 16.4,6.6" fill="none" stroke="#f0fff0" stroke-width="2.5" stroke-linecap="round" stroke-linejoin="round"/></svg>
<div class="t " style="left:1951.9px;top:1177px;font-size:19.85px;line-height:19.85px;color:#212529;font-weight:400;">28-Oct-2023</div>
<div class="t " style="left:2110.0px;top:1177px;font-size:19.85px;line-height:19.85px;color:#212529;font-weight:400;">27-Nov-2023</div>
<div class="t " style="left:2267.9px;top:1177px;font-size:19.85px;line-height:19.85px;color:#212529;font-weight:400;">0</div>
<div class="r" style="left:2389px;top:1176px;width:47px;height:31px;background:#f0f0f0;border-radius:4px;"></div>
<svg style="left:2400px;top:1175.50px" width="24" height="31"><path d="M4 9.7 H20 M4 16.4 H20 M4 23 H20" stroke="#111" stroke-width="1.5"/></svg>
<div class="r" style="left:465px;top:1216px;width:1980px;height:1px;background:#dcdcdc;"></div>
<div class="r" style="left:0px;top:0px;width:2536px;height:1187px;background:rgba(0,0,0,0.5);"></div>
<div class="r" style="left:2536px;top:0px;width:25px;height:1187px;background:#f1f1f1;"></div>
<svg style="left:2543px;top:9px" width="12" height="7"><polygon points="0,6.5 5.5,0.5 11,6.5" fill="#a3a3a3"/></svg>
<svg style="left:2543px;top:1170px" width="12" height="7"><polygon points="0,0.5 5.5,6.5 11,0.5" fill="#a3a3a3"/></svg>
<div style="position:absolute;left:0;top:0;width:2561px;height:1187px;will-change:transform;">
<div class="r" style="left:790px;top:119px;width:957px;height:697px;background:#fff;border-radius:13px;box-shadow:0 12px 40px rgba(0,0,0,0.28), 0 4px 16px rgba(0,0,0,0.15);"></div>
<svg style="left:1683px;top:146px" width="38" height="36"><path d="M5.1 4.1 L32 31 M32 4.1 L5.1 31" stroke="#8a8a8a" stroke-width="3" stroke-linecap="round"/></svg>
<div class="t " style="left:1171.0px;top:154px;font-size:33px;line-height:33px;color:#212529;font-weight:400;">New Member</div>
<div class="t " style="left:822.5px;top:225px;font-size:19.85px;line-height:19.85px;color:#343434;font-weight:400;">Membership Plan</div>
<div class="r" style="left:823px;top:254px;width:455px;height:43px;border:1px solid #000;border-radius:4px;"></div>
<div class="t " style="left:839.0px;top:266px;font-size:19.85px;line-height:19.85px;color:#222;font-weight:400;">1-Month 1-Time 1 Hour Ticket</div>
<svg style="left:1254px;top:269px" width="18" height="12"><polyline points="2,2.2 8.5,8.6 15,2.2" fill="none" stroke="#111" stroke-width="2"/></svg>
<div class="t " style="left:822.5px;top:325px;font-size:19.85px;line-height:19.85px;color:#343434;font-weight:400;">Start Date</div>
<div class="t " style="left:1267.5px;top:325px;font-size:19.85px;line-height:19.85px;color:#343434;font-weight:400;">End Date</div>
<div class="r" style="left:823px;top:353px;width:429px;height:42px;background:#dedede;border:1px solid #000;border-radius:4px;"></div>
<div class="t " style="left:831.5px;top:365px;font-size:19.85px;line-height:19.85px;color:#333;font-weight:400;">04-May-2024</div>
<div class="r" style="left:1268px;top:353px;width:429px;height:42px;background:#dedede;border:1px solid #000;border-radius:4px;"></div>
<div class="t " style="left:1276.5px;top:365px;font-size:19.85px;line-height:19.85px;color:#333;font-weight:400;">03-Jun-2024</div>
<div class="t " style="left:822.5px;top:423px;font-size:19.85px;line-height:19.85px;color:#343434;font-weight:400;">Account</div>
<div class="t " style="left:822.5px;top:454px;font-size:19.85px;line-height:19.85px;color:#222;font-weight:400;">A-50-1/2</div>
<div class="t " style="left:929.0px;top:454px;font-size:19.85px;line-height:19.85px;color:#3b6fd6;font-weight:400;">Clear Selection</div>
<div class="t " style="left:822.5px;top:503px;font-size:19.85px;line-height:19.85px;color:#343434;font-weight:400;">Owner</div>
<div class="r" style="left:823px;top:530px;width:891px;height:43px;border:1px solid #000;border-radius:4px;"></div>
<div class="t " style="left:837.5px;top:543px;font-size:19.85px;line-height:19.85px;color:#222;font-weight:400;">LIM SEE CEE</div>
<svg style="left:1690px;top:545px" width="18" height="12"><polyline points="2,2.2 8.5,8.6 15,2.2" fill="none" stroke="#111" stroke-width="2"/></svg>
<div class="t " style="left:822.5px;top:600px;font-size:19.85px;line-height:19.85px;color:#343434;font-weight:400;">Apply For</div>
<svg style="left:823px;top:629px" width="891" height="42"><rect x="1.25" y="1.25" width="888.5" height="39.5" rx="4.5" fill="none" stroke="#000" stroke-width="2.5"/></svg>
<div class="t " style="left:832.0px;top:642px;font-size:19.85px;line-height:19.85px;color:#222;font-weight:400;">Own use</div>
<svg style="left:1690px;top:644px" width="18" height="12"><polyline points="2,2.2 8.5,8.6 15,2.2" fill="none" stroke="#111" stroke-width="2"/></svg>
<div class="r" style="left:1234px;top:737px;width:68px;height:46px;background:#3366ff;border-radius:5px;"></div>
<div class="t " style="left:1249.5px;top:749px;font-size:19px;line-height:19px;color:#fff;font-weight:700;">Add</div>
</div>
</body></html>
